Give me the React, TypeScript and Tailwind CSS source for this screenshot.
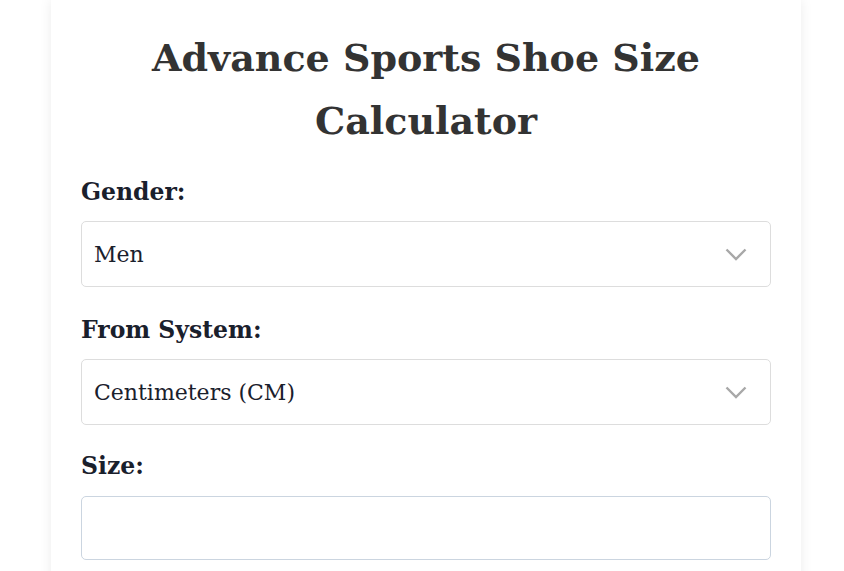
const serif = { fontFamily: '"DejaVu Serif", "Liberation Serif", serif' };

function SelectBox({ value }: { value: string }) {
  return (
    <div className="relative h-[66px] rounded-[5px] border border-[#dddddd] bg-white flex items-center pl-[12px]">
      <span className="text-[22px] text-[#1a202c]">{value}</span>
      <svg
        className="absolute right-[23px] top-[26px]"
        width="22"
        height="13"
        viewBox="0 0 22 13"
        fill="none"
        stroke="#a8a8a8"
        strokeWidth="2.4"
      >
        <path d="M1.5 1.5 L11 11 L20.5 1.5" />
      </svg>
    </div>
  );
}

export default function App() {
  return (
    <div className="min-h-screen bg-white flex justify-center pl-[8px]" style={serif}>
      <div className="w-[750px] bg-white shadow-[0_0_12px_rgba(0,0,0,0.08)] px-[30px] pt-[26px] pb-10">
        <h1 className="text-center font-bold text-[#333333] text-[38px] leading-[63px]">
          Advance Sports Shoe Size Calculator
        </h1>
        <div className="mt-[25px] flex flex-col">
          <label className="font-bold text-[23.5px] leading-[30px] text-[#1a202c]">Gender:</label>
          <div className="mt-[14px]">
            <SelectBox value="Men" />
          </div>
          <label className="mt-[28px] font-bold text-[23.5px] leading-[30px] text-[#1a202c]">From System:</label>
          <div className="mt-[14px]">
            <SelectBox value="Centimeters (CM)" />
          </div>
          <label className="mt-[26px] font-bold text-[23.5px] leading-[30px] text-[#1a202c]">Size:</label>
          <input className="mt-[15px] h-[64px] rounded-[5px] border border-[#cbd5e0] bg-white px-3 text-[22px] outline-none" />
        </div>
      </div>
    </div>
  );
}
